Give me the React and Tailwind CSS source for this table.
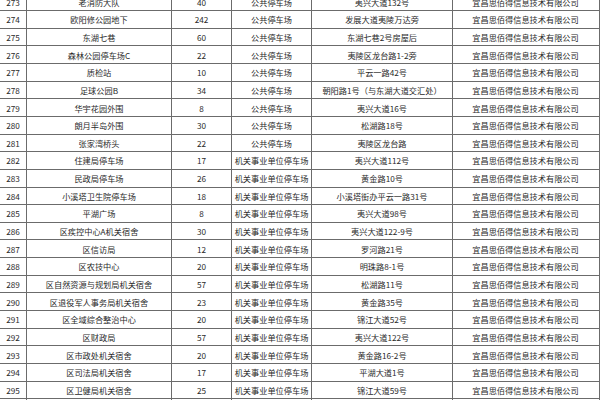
const TYPE_PUB = '公共停车场'
const TYPE_GOV = '机关事业单位停车场'
const COMPANY = '宜昌思佰得信息技术有限公司'

const rows = [
  [273, '老消防大队', 40, TYPE_PUB, '夷兴大道132号'],
  [274, '欧阳修公园地下', 242, TYPE_PUB, '发展大道夷陵万达旁'],
  [275, '东湖七巷', 60, TYPE_PUB, '东湖七巷2号房屋后'],
  [276, '森林公园停车场C', 22, TYPE_PUB, '夷陵区龙台路1-2旁'],
  [277, '质检站', 10, TYPE_PUB, '平云一路42号'],
  [278, '足球公园B', 34, TYPE_PUB, '朝阳路1号（与东湖大道交汇处）'],
  [279, '华宇花园外围', 8, TYPE_PUB, '夷兴大道16号'],
  [280, '朗月半岛外围', 30, TYPE_PUB, '松湖路18号'],
  [281, '张家湾桥头', 22, TYPE_PUB, '夷陵区龙台路'],
  [282, '住建局停车场', 17, TYPE_GOV, '夷兴大道112号'],
  [283, '民政局停车场', 26, TYPE_GOV, '黄金路10号'],
  [284, '小溪塔卫生院停车场', 18, TYPE_GOV, '小溪塔街办平云一路31号'],
  [285, '平湖广场', 8, TYPE_GOV, '夷兴大道98号'],
  [286, '区疾控中心A机关宿舍', 30, TYPE_GOV, '夷兴大道122-9号'],
  [287, '区信访局', 12, TYPE_GOV, '罗河路21号'],
  [288, '区农技中心', 20, TYPE_GOV, '明珠路8-1号'],
  [289, '区自然资源与规划局机关宿舍', 57, TYPE_GOV, '松湖路11号'],
  [290, '区退役军人事务局机关宿舍', 23, TYPE_GOV, '黄金路35号'],
  [291, '区全域综合整治中心', 20, TYPE_GOV, '锦江大道52号'],
  [292, '区财政局', 57, TYPE_GOV, '夷兴大道122号'],
  [293, '区市政处机关宿舍', 20, TYPE_GOV, '黄金路16-2号'],
  [294, '区司法局机关宿舍', 17, TYPE_GOV, '平湖大道1号'],
  [295, '区卫健局机关宿舍', 25, TYPE_GOV, '锦江大道59号'],
  [296, '区水利局机关宿舍', 20, TYPE_GOV, '夷兴大道100号'],
]

function Cell({ className = '', children }) {
  return (
    <div className={`flex items-center justify-center whitespace-nowrap overflow-hidden border-r border-[#6b6b6b] ${className}`}>
      {children}
    </div>
  )
}

export default function App() {
  return (
    <div className="w-[600px] h-[400px] overflow-hidden bg-white text-[#2a2a2a] text-[8.2px] leading-none font-['Noto_Sans_CJK_SC',sans-serif]">
      <div className="-mt-[6.5px]">
        {rows.map(([idx, name, count, type, addr]) => (
          <div key={idx} className="flex h-[17.65px] border-b border-[#6b6b6b]">
            <Cell className="w-[27px] shrink-0">{idx}</Cell>
            <Cell className="w-[145px] shrink-0">{name}</Cell>
            <Cell className="w-[60px] shrink-0">{count}</Cell>
            <Cell className="w-[80px] shrink-0">{type}</Cell>
            <Cell className="w-[141px] shrink-0">{addr}</Cell>
            <Cell className="flex-1 w-[148px] pr-[1px]">{COMPANY}</Cell>
          </div>
        ))}
      </div>
    </div>
  )
}
